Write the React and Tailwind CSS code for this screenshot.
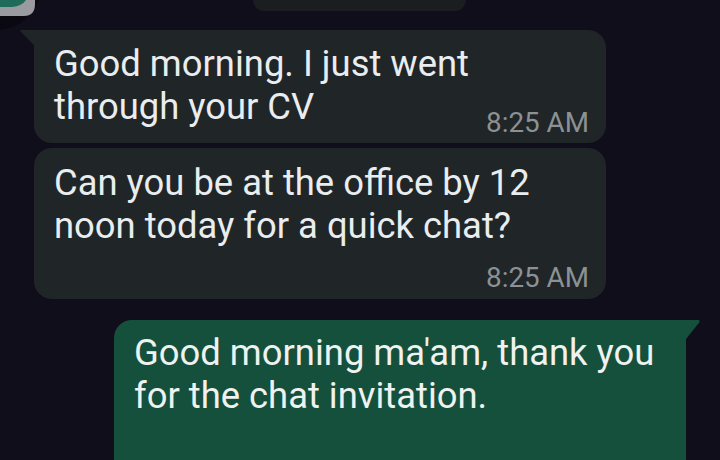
import React from "react";

const font = { fontFamily: "Roboto, 'Noto Sans', sans-serif" };

// ─── Bubble pieces ───────────────────────────────────────────────────────────
function Time({ className = "" }) {
  return (
    <div className={`text-right text-[27.8px] leading-[32px] text-[#8c9194] ${className}`}>
      8:25 AM
    </div>
  );
}

function Avatar() {
  return (
    <svg width="46" height="30" viewBox="0 0 46 30" className="shrink-0">
      <circle cx="-4" cy="-16" r="46" fill="#0a0811" />
      <path d="M0 0 H35 V4 Q35 16 24 16 H0 Z" fill="#9a9ba1" />
      <path d="M0 0 H26 Q22 6 12 7 H0 Z" fill="#1f6b5a" />
    </svg>
  );
}

function IncomingTail() {
  return (
    <svg width="14" height="15" viewBox="0 0 14 15" className="shrink-0 self-start">
      <path d="M1 0 H14 V15 L0.6 1.6 Q0 0.6 1 0 Z" fill="#202528" />
    </svg>
  );
}

function OutgoingTail() {
  return (
    <svg width="14" height="19" viewBox="0 0 14 19" className="shrink-0 self-start">
      <path d="M0 0 H12.5 Q14.4 0.5 13.2 2.4 L0 19 Z" fill="#15503d" />
    </svg>
  );
}

// ─── Main ────────────────────────────────────────────────────────────────────
export default function App() {
  return (
    <div
      className="w-[720px] h-[460px] overflow-hidden bg-[#110e1b] text-[36.4px] leading-[43px] text-[#e9edef]"
      style={font}
    >
      {/* previous message + avatar, cropped */}
      <div className="flex h-[30px]">
        <Avatar />
        <div className="ml-[207px] h-[11px] w-[213px] rounded-b-[14px] bg-[#1a1e21]" />
      </div>

      {/* incoming */}
      <div className="flex pl-[20px]">
        <IncomingTail />
        <div className="w-[572px] rounded-[18px] rounded-tl-none bg-[#202528] pl-[20px] pr-[17px] pt-[12px] pb-[4px]">
          <div>
            Good morning. I just went
            <br />
            through your CV
          </div>
          <Time className="-mt-[21px]" />
        </div>
      </div>

      <div className="mt-[5px] pl-[34px]">
        <div className="w-[572px] rounded-[18px] bg-[#202528] pl-[20px] pr-[17px] pt-[13px] pb-[5px]">
          <div>
            Can you be at the office by 12
            <br />
            noon today for a quick chat?
          </div>
          <Time className="mt-[15px]" />
        </div>
      </div>

      {/* outgoing */}
      <div className="mt-[21px] flex justify-end pr-[20px]">
        <div className="h-[160px] w-[572px] rounded-[18px] rounded-tr-none bg-[#15503d] pl-[20px] pr-[17px] pt-[11px] text-[#eef2f0]">
          Good morning ma'am, thank you
          <br />
          for the chat invitation.
        </div>
        <OutgoingTail />
      </div>
    </div>
  );
}
